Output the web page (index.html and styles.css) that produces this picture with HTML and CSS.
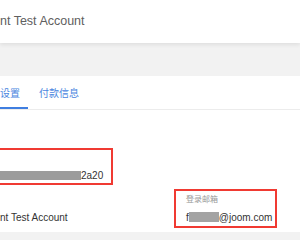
FILE: index.html
```html
<!DOCTYPE html>
<html>
<head>
    <meta name="viewport" content="width=device-width, initial-scale=1.0">
    <title>Account settings</title>
    <link rel="stylesheet" href="styles.css">
</head>
<body>
    <header class="topbar">
        <span class="account-name">nt Test Account</span>
    </header>

    <main class="card">
        <nav class="tabs">
            <a class="tab tab-first active">设置</a>
            <a class="tab">付款信息</a>
        </nav>

        <section class="info">
            <div class="field highlight field-id">
                <div class="field-value"><span class="mask mask-id"></span>2a20</div>
            </div>

            <div class="info-row">
                <div class="field">
                    <div class="field-label">&nbsp;</div>
                    <div class="field-value">nt Test Account</div>
                </div>
                <div class="field highlight">
                    <div class="field-label">登录邮箱</div>
                    <div class="field-value">f<span class="mask mask-email"></span>@joom.com</div>
                </div>
            </div>
        </section>
    </main>
</body>
</html>
```

FILE: styles.css
```css
html, body {
    margin: 0;
    padding: 0;
    overflow: hidden;
}

body {
    font-family: "Liberation Sans", Arial, "Noto Sans CJK SC", sans-serif;
    background-color: #f2f2f2;
    color: #333;
}

.topbar {
    height: 43px;
    background-color: #fff;
    box-shadow: 0 2px 4px rgba(0, 0, 0, 0.08);
    display: flex;
    align-items: center;
    position: relative;
}

.account-name {
    font-size: 12.5px;
    color: #606060;
    margin-top: -1px;
}

.card {
    margin-top: 33px;
    background-color: #fff;
    padding-bottom: 4px;
}

.tabs {
    display: flex;
    gap: 1px;
    border-bottom: 1px solid #ececec;
}

.tab {
    font-family: "Noto Sans CJK SC", sans-serif;
    font-size: 10px;
    line-height: 14px;
    padding: 10px 10px 7px;
    color: #4a86e0;
    border-bottom: 2px solid transparent;
}

.tab-first {
    margin-left: -10px;
    padding-right: 8px;
}

.tab.active {
    border-bottom-color: #3f7ee0;
}

.info {
    padding-top: 38px;
}

.field {
    border: 2px solid transparent;
    padding: 2px 3px 2px 10px;
}

.field.highlight {
    border-color: #f03a32;
}

.field-id {
    display: inline-block;
    margin-left: -30px;
    padding: 19px 8px 1px 10px;
}

.field-label {
    font-family: "Noto Sans CJK SC", sans-serif;
    font-size: 8px;
    line-height: 11px;
    color: #999;
    margin-bottom: 8px;
}

.field-value {
    font-size: 10px;
    line-height: 12px;
    white-space: nowrap;
}

.field-id .field-value {
    line-height: 13px;
}

.mask {
    display: inline-block;
    vertical-align: middle;
    background-color: #9c9c9c;
}

.mask-id {
    width: 99px;
    height: 9px;
    margin-top: -2px;
}

.mask-email {
    width: 30px;
    height: 10px;
    margin-top: -2px;
    background-color: #a3a3a3;
}

.info-row {
    display: grid;
    grid-template-columns: 174px auto;
    margin-top: 4px;
}

.info-row .field:first-child {
    padding-left: 0;
    margin-left: -2px;
}

.info-row .highlight {
    justify-self: start;
}
```
